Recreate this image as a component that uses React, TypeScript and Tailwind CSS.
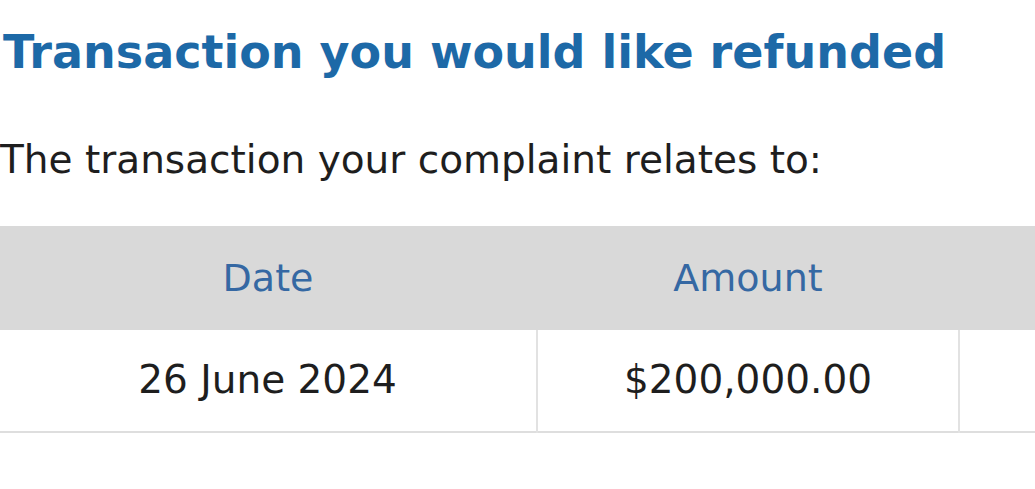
export default function App() {
  return (
    <div className="w-[1035px] h-[489px] overflow-hidden bg-white font-['DejaVu_Sans',sans-serif]">
      <h1 className="pt-[24px] pl-[3px] text-[46px] leading-[56px] font-bold text-[#1d69a7] whitespace-nowrap">
        Transaction you would like refunded
      </h1>
      <p className="mt-[58px] text-[39px] leading-[44px] text-[#1e1e1e] whitespace-nowrap">
        The transaction your complaint relates to:
      </p>
      <table className="mt-[44px] border-collapse table-fixed w-[1200px] ml-[-1px]">
        <thead>
          <tr className="bg-[#d9d9d9] h-[104px]">
            <th className="w-[538px] font-normal text-[38px] text-[#3568a3]">Date</th>
            <th className="w-[422px] font-normal text-[38px] text-[#3568a3]">Amount</th>
            <th className="font-normal" />
          </tr>
        </thead>
        <tbody>
          <tr className="h-[102px] border-b-2 border-[#dedede]">
            <td className="text-center text-[39px] text-[#1e1e1e] border-r-2 border-[#e2e2e2]">26 June 2024</td>
            <td className="text-center text-[39px] text-[#1e1e1e] border-r-2 border-[#e2e2e2]">$200,000.00</td>
            <td />
          </tr>
        </tbody>
      </table>
    </div>
  );
}
